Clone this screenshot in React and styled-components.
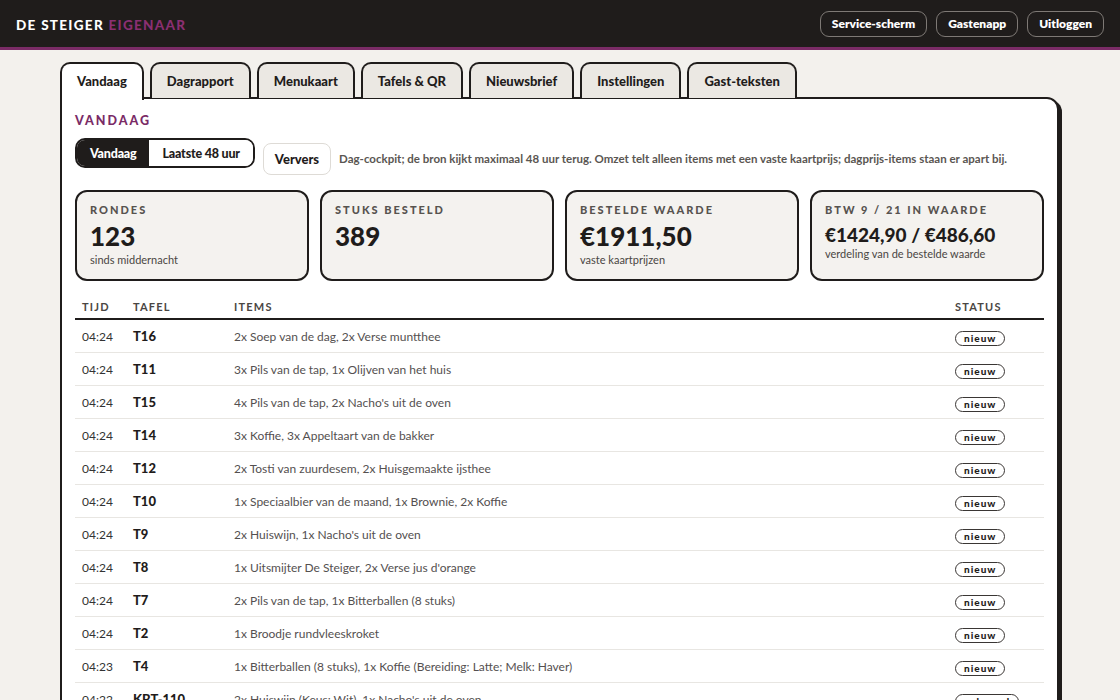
import React from "react";
import styled, { createGlobalStyle } from "styled-components";

const GlobalStyle = createGlobalStyle`
    html, body {
        margin: 0;
        padding: 0;
        background: #f3f1ed;
        font-family: Lato, "Noto Sans", sans-serif;
        color: #1f1c1b;
    }
    * {
        box-sizing: border-box;
    }
`;

const tabs = [
    "Vandaag",
    "Dagrapport",
    "Menukaart",
    "Tafels & QR",
    "Nieuwsbrief",
    "Instellingen",
    "Gast-teksten",
];

const stats = [
    { label: "Rondes", value: "123", sub: "sinds middernacht" },
    { label: "Stuks besteld", value: "389", sub: "" },
    { label: "Bestelde waarde", value: "€1911,50", sub: "vaste kaartprijzen" },
    {
        label: "BTW 9 / 21 in waarde",
        value: "€1424,90 / €486,60",
        sub: "verdeling van de bestelde waarde",
        small: true,
    },
];

const orders = [
    ["04:24", "T16", "2x Soep van de dag, 2x Verse muntthee", "nieuw"],
    ["04:24", "T11", "3x Pils van de tap, 1x Olijven van het huis", "nieuw"],
    ["04:24", "T15", "4x Pils van de tap, 2x Nacho's uit de oven", "nieuw"],
    ["04:24", "T14", "3x Koffie, 3x Appeltaart van de bakker", "nieuw"],
    ["04:24", "T12", "2x Tosti van zuurdesem, 2x Huisgemaakte ijsthee", "nieuw"],
    ["04:24", "T10", "1x Speciaalbier van de maand, 1x Brownie, 2x Koffie", "nieuw"],
    ["04:24", "T9", "2x Huiswijn, 1x Nacho's uit de oven", "nieuw"],
    ["04:24", "T8", "1x Uitsmijter De Steiger, 2x Verse jus d'orange", "nieuw"],
    ["04:24", "T7", "2x Pils van de tap, 1x Bitterballen (8 stuks)", "nieuw"],
    ["04:24", "T2", "1x Broodje rundvleeskroket", "nieuw"],
    ["04:23", "T4", "1x Bitterballen (8 stuks), 1x Koffie (Bereiding: Latte; Melk: Haver)", "nieuw"],
    ["04:22", "KBT-110", "2x Huiswijn (Keus: Wit), 1x Nacho's uit de oven", "geleverd"],
];

const App = () => {
    return (
        <>
            <GlobalStyle />
            <TopBar>
                <Brand>
                    DE STEIGER <BrandAccent>EIGENAAR</BrandAccent>
                </Brand>
                <TopActions>
                    <TopButton>Service-scherm</TopButton>
                    <TopButton>Gastenapp</TopButton>
                    <TopButton>Uitloggen</TopButton>
                </TopActions>
            </TopBar>
            <Main>
                <Tabs>
                    {tabs.map((t, i) => (
                        <Tab key={t} $active={i === 0}>
                            {t}
                        </Tab>
                    ))}
                </Tabs>
                <Panel>
                    <SectionTitle>Vandaag</SectionTitle>
                    <Controls>
                        <Toggle>
                            <Segment $active>Vandaag</Segment>
                            <Segment>Laatste 48 uur</Segment>
                        </Toggle>
                        <RefreshButton>Ververs</RefreshButton>
                        <Note>
                            Dag-cockpit; de bron kijkt maximaal 48 uur terug.
                            Omzet telt alleen items met een vaste kaartprijs;
                            dagprijs-items staan er apart bij.
                        </Note>
                    </Controls>
                    <Stats>
                        {stats.map((s) => (
                            <StatCard key={s.label}>
                                <StatLabel>{s.label}</StatLabel>
                                <StatValue $small={s.small}>{s.value}</StatValue>
                                <StatSub>{s.sub}</StatSub>
                            </StatCard>
                        ))}
                    </Stats>
                    <Table>
                        <HeadRow>
                            <HeadCell>Tijd</HeadCell>
                            <HeadCell>Tafel</HeadCell>
                            <HeadCell>Items</HeadCell>
                            <HeadCell>Status</HeadCell>
                        </HeadRow>
                        {orders.map((o, i) => (
                            <Row key={i}>
                                <Time>{o[0]}</Time>
                                <TableName>{o[1]}</TableName>
                                <Items>{o[2]}</Items>
                                <div>
                                    <Pill>{o[3]}</Pill>
                                </div>
                            </Row>
                        ))}
                    </Table>
                </Panel>
            </Main>
        </>
    );
};

export default App;

const TopBar = styled.header`
    height: 50px;
    background: #1f1c1b;
    border-bottom: 3px solid #7a2b66;
    display: flex;
    align-items: center;
    justify-content: space-between;
    padding: 0 16px;
`;

const Brand = styled.div`
    color: #fff;
    font-weight: 900;
    font-size: 13.5px;
    letter-spacing: 1.3px;
    margin-top: 2px;
`;

const BrandAccent = styled.span`
    color: #8a2f72;
`;

const TopActions = styled.div`
    display: flex;
    gap: 9px;
`;

const TopButton = styled.button`
    height: 26px;
    padding: 0 11px;
    background: transparent;
    color: #fff;
    border: 1.5px solid #7e7975;
    border-radius: 9px;
    font-family: Lato, sans-serif;
    font-weight: 800;
    font-size: 12px;
`;

const Main = styled.main`
    padding: 12px 58px 0 60px;
`;

const Tabs = styled.nav`
    display: flex;
    gap: 6px;
    position: relative;
    z-index: 1;
`;

const Tab = styled.div`
    height: ${(p) => (p.$active ? "38px" : "36px")};
    margin-bottom: ${(p) => (p.$active ? "-2px" : "0")};
    padding: 0 15px;
    display: flex;
    align-items: center;
    justify-content: center;
    padding-bottom: ${(p) => (p.$active ? "2px" : "0")};
    background: ${(p) => (p.$active ? "#fff" : "#ebe8e3")};
    border: 2px solid #1f1c1b;
    border-bottom: none;
    border-radius: 10px 10px 0 0;
    font-weight: 900;
    font-size: 13px;
    color: #1f1c1b;
`;

const Panel = styled.section`
    margin-top: -1px;
    width: 999px;
    background: #fff;
    border: 2px solid #1f1c1b;
    border-radius: 0 12px 0 0;
    box-shadow: 3px 3px 0 #1f1c1b;
    padding: 14px 13px 20px;
    min-height: 620px;
`;

const SectionTitle = styled.h2`
    margin: 0;
    font-size: 12.5px;
    font-weight: 900;
    letter-spacing: 2px;
    text-transform: uppercase;
    color: #7a2b66;
`;

const Controls = styled.div`
    margin-top: 10px;
    display: flex;
    align-items: flex-end;
    gap: 8px;
`;

const Toggle = styled.div`
    display: flex;
    height: 30px;
    border: 2px solid #1f1c1b;
    border-radius: 10px;
    overflow: hidden;
    margin-bottom: 7px;
`;

const Segment = styled.div`
    display: flex;
    align-items: center;
    padding: 0 13px;
    font-size: 12.5px;
    font-weight: 900;
    letter-spacing: -0.2px;
    background: ${(p) => (p.$active ? "#1f1c1b" : "#fff")};
    color: ${(p) => (p.$active ? "#fff" : "#1f1c1b")};
`;

const RefreshButton = styled.button`
    height: 32px;
    padding: 0 11px;
    background: #fff;
    border: 1px solid #dedbd6;
    border-radius: 8px;
    font-family: Lato, sans-serif;
    font-weight: 900;
    font-size: 13px;
    color: #1f1c1b;
`;

const Note = styled.p`
    margin: 0 0 10px;
    font-size: 11.5px;
    font-weight: 700;
    color: #5a5652;
    white-space: nowrap;
`;

const Stats = styled.div`
    margin-top: 15px;
    display: grid;
    grid-template-columns: repeat(4, 234px);
    gap: 11px;
`;

const StatCard = styled.div`
    height: 91px;
    background: #f4f2ef;
    border: 2px solid #1f1c1b;
    border-radius: 12px;
    padding: 11px 13px;
    display: flex;
    flex-direction: column;
`;

const StatLabel = styled.div`
    font-size: 11px;
    font-weight: 900;
    letter-spacing: 2px;
    text-transform: uppercase;
    color: #57534f;
`;

const StatValue = styled.div`
    font-size: ${(p) => (p.$small ? "19px" : "26px")};
    font-weight: 900;
    color: #1f1c1b;
    line-height: ${(p) => (p.$small ? "24px" : "34px")};
    margin-top: ${(p) => (p.$small ? "7px" : "3px")};
`;

const StatSub = styled.div`
    font-size: 11px;
    color: #4a4643;
    margin-top: 0;
`;

const Table = styled.div`
    margin-top: 13px;
`;

const cols = `
    display: grid;
    grid-template-columns: 51px 101px 1fr 96px;
    align-items: center;
    & > * {
        padding-left: 7px;
    }
`;

const HeadRow = styled.div`
    ${cols}
    height: 26px;
    border-bottom: 2px solid #1f1c1b;
`;

const HeadCell = styled.div`
    font-size: 11px;
    font-weight: 700;
    letter-spacing: 1.2px;
    text-transform: uppercase;
    color: #4a4643;
`;

const Row = styled.div`
    ${cols}
    height: 33px;
    border-bottom: 1px solid #e8e6e2;
`;

const Time = styled.div`
    font-size: 12px;
    color: #333;
`;

const TableName = styled.div`
    font-size: 13px;
    font-weight: 900;
    color: #1f1c1b;
`;

const Items = styled.div`
    font-size: 12px;
    color: #545050;
    white-space: nowrap;
`;

const Pill = styled.span`
    display: inline-flex;
    align-items: center;
    height: 15px;
    padding: 0 8px;
    border: 1.5px solid #3a3634;
    border-radius: 999px;
    font-size: 10px;
    font-weight: 900;
    letter-spacing: 1px;
    color: #1f1c1b;
`;
